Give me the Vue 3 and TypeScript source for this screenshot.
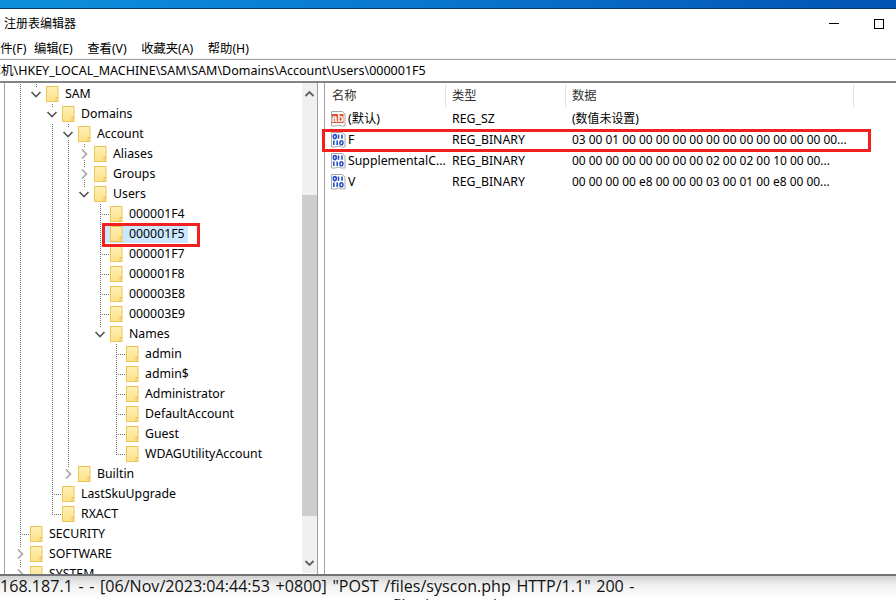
<script setup lang="ts">
interface TreeRow { label: string; cells: string; selected?: boolean }
const tree: TreeRow[] = [
  { label: 'SAM', cells: 'va' },
  { label: 'Domains', cells: 'v_a' },
  { label: 'Account', cells: 'v_vb' },
  { label: 'Aliases', cells: 'v_vvC' },
  { label: 'Groups', cells: 'v_vvC' },
  { label: 'Users', cells: 'v_vva' },
  { label: '000001F4', cells: 'v_vv_t' },
  { label: '000001F5', cells: 'v_vv_t', selected: true },
  { label: '000001F7', cells: 'v_vv_t' },
  { label: '000001F8', cells: 'v_vv_t' },
  { label: '000003E8', cells: 'v_vv_t' },
  { label: '000003E9', cells: 'v_vv_t' },
  { label: 'Names', cells: 'v_vv_a' },
  { label: 'admin', cells: 'v_vv__t' },
  { label: 'admin$', cells: 'v_vv__t' },
  { label: 'Administrator', cells: 'v_vv__t' },
  { label: 'DefaultAccount', cells: 'v_vv__t' },
  { label: 'Guest', cells: 'v_vv__t' },
  { label: 'WDAGUtilityAccount', cells: 'v_vv__l' },
  { label: 'Builtin', cells: 'v_vc' },
  { label: 'LastSkuUpgrade', cells: 'v_t' },
  { label: 'RXACT', cells: 'v_l' },
  { label: 'SECURITY', cells: 't' },
  { label: 'SOFTWARE', cells: 'C' },
  { label: 'SYSTEM', cells: 'C' },
]
const menus = ['编辑(E)', '查看(V)', '收藏夹(A)', '帮助(H)']
const values = [
  { icon: 'ab', name: '(默认)', type: 'REG_SZ', data: '(数值未设置)' },
  { icon: 'bin', name: 'F', type: 'REG_BINARY', data: '03 00 01 00 00 00 00 00 00 00 00 00 00 00 00 00...' },
  { icon: 'bin', name: 'SupplementalC...', type: 'REG_BINARY', data: '00 00 00 00 00 00 00 00 02 00 02 00 10 00 00...' },
  { icon: 'bin', name: 'V', type: 'REG_BINARY', data: '00 00 00 00 e8 00 00 00 03 00 01 00 e8 00 00...' },
]
const cellClass: Record<string, string> = {
  _: '', v: 'line', t: 'tee', l: 'corner', a: 'stub', b: 'line', c: 'stub', C: 'line',
}
</script>

<template>
  <div class="screen">
    <div class="accent"></div>
    <header class="titlebar">
      <span class="title">注册表编辑器</span>
      <div class="controls">
        <span class="minimize"></span>
        <span class="maximize"></span>
      </div>
    </header>
    <nav class="menubar">
      <span class="menu-first">文件(F)</span>
      <span v-for="m in menus" :key="m" class="menu">{{ m }}</span>
    </nav>
    <div class="address"><span class="address-text">计算机\HKEY_LOCAL_MACHINE\SAM\SAM\Domains\Account\Users\000001F5</span></div>

    <main class="panes">
      <section class="tree">
        <div class="tree-rows">
          <div v-for="row in tree" :key="row.label" class="row">
            <span
              v-for="(c, i) in row.cells.split('')"
              :key="i"
              class="cell"
              :class="cellClass[c]"
            >
              <svg v-if="c === 'a' || c === 'b'" class="chev" width="12" height="12" viewBox="0 0 12 12">
                <path d="M1.5 4 L6 8.5 L10.5 4" fill="none" stroke="#595959" stroke-width="1.7" />
              </svg>
              <svg v-else-if="c === 'c' || c === 'C'" class="chev" width="12" height="12" viewBox="0 0 12 12">
                <path d="M4 1.5 L8.5 6 L4 10.5" fill="none" stroke="#a6a6a6" stroke-width="1.7" />
              </svg>
            </span>
            <span class="entry" :class="{ selected: row.selected }">
              <svg class="folder" width="13" height="16" viewBox="0 0 13 16">
                <defs>
                  <linearGradient id="fill" x1="0" y1="0" x2="0" y2="1">
                    <stop offset="0" stop-color="#fff0b4" />
                    <stop offset="1" stop-color="#fde08a" />
                  </linearGradient>
                </defs>
                <rect x="0.5" y="0.5" width="11.5" height="15" fill="url(#fill)" stroke="#ecc654" />
                <path d="M10 15.5 V11.5 H12.5" fill="none" stroke="#ecc654" />
              </svg>
              <span class="label">{{ row.label }}</span>
            </span>
          </div>
        </div>
        <div class="scrollbar">
          <svg class="arrow" width="15" height="20" viewBox="0 0 15 20">
            <path d="M3.5 13 L7.5 9 L11.5 13" fill="none" stroke="#606060" stroke-width="1.8" />
          </svg>
          <span class="track-a"></span>
          <span class="thumb"></span>
          <span class="track-b"></span>
          <svg class="arrow" width="15" height="20" viewBox="0 0 15 20">
            <path d="M3.5 8 L7.5 12 L11.5 8" fill="none" stroke="#606060" stroke-width="1.8" />
          </svg>
        </div>
        <div class="mark mark-tree"></div>
      </section>

      <section class="list">
        <div class="list-head">
          <span class="col-name head-cell head-first">名称</span>
          <span class="col-type head-cell">类型</span>
          <span class="col-data head-cell">数据</span>
        </div>
        <div v-for="v in values" :key="v.name" class="value">
          <span class="col-name value-name">
            <svg v-if="v.icon === 'ab'" class="vicon" width="16" height="17" viewBox="0 0 16 17">
              <path d="M1.5 1.5 H12.5 L15 4 V16 H11.5 L8.5 15 L5 16 L1.5 16 Z" fill="#fff" stroke="#a9a9a9" />
              <rect x="2" y="4" width="11.5" height="9" fill="#d9532f" />
              <text x="7.7" y="11.6" text-anchor="middle" class="ab">ab</text>
            </svg>
            <svg v-else class="vicon" width="16" height="17" viewBox="0 0 16 17">
              <path d="M1.5 1.5 H12.5 L15 4 V16 H11.5 L8.5 15 L5 16 L1.5 16 Z" fill="#fff" stroke="#a9a9a9" />
              <g fill="none" stroke="#2450c8" stroke-width="1.6">
                <ellipse cx="4.8" cy="5.6" rx="1.5" ry="2" />
                <path d="M8.5 3.4 V7.8 M12 3.4 V7.8 M3.8 9.6 V14 M7.2 9.6 V14" />
                <ellipse cx="11.4" cy="11.8" rx="1.5" ry="2" />
              </g>
            </svg>
            <span>{{ v.name }}</span>
          </span>
          <span class="col-type">{{ v.type }}</span>
          <span class="col-data">{{ v.data }}</span>
        </div>
        <div class="mark mark-list"></div>
      </section>
    </main>

    <footer class="log">
      <div class="log-line">168.187.1 - - [06/Nov/2023:04:44:53 +0800] "POST /files/syscon.php HTTP/1.1" 200 -</div>
      <div class="log-next">files/syscon.php</div>
    </footer>
  </div>
</template>

<style>
html, body { margin: 0; padding: 0; background: #fff; overflow: hidden; }
</style>

<style scoped>
.screen {
  width: 896px;
  height: 600px;
  display: flex;
  flex-direction: column;
  overflow: hidden;
  background: #fff;
  color: #000;
  font: 12.3px/20px "Noto Sans", "Noto Sans CJK SC", sans-serif;
}
.accent {
  height: 8px;
  flex: none;
  background: linear-gradient(90deg, #0c90dc 0%, #0a78cf 45%, #0353b3 100%);
  border-bottom: 1px solid #0b3a6e;
}
.titlebar {
  height: 31px;
  flex: none;
  display: flex;
  align-items: center;
  justify-content: space-between;
  padding-left: 4px;
}
.title { font-size: 12px; position: relative; top: -1px; }
.controls { display: flex; align-items: center; width: 67px; height: 31px; position: relative; top: -1px; flex: none; }
.minimize { width: 10px; height: 1px; flex: none; background: #000; margin-right: 35px; }
.maximize { width: 8px; height: 8px; flex: none; border: 1px solid #000; }
.menubar {
  height: 18px;
  padding-bottom: 1px;
  box-sizing: content-box;
  flex: none;
  display: flex;
  align-items: center;
  border-bottom: 1px solid #a0a0a0;
  box-shadow: inset 0 -1px 0 #f0f0f0;
}
.menu-first { margin-left: -12px; width: 46px; flex: none; }
.menu { margin-right: 14.5px; }
.address {
  height: 21px;
  flex: none;
  display: flex;
  align-items: center;
  overflow: hidden;
  border-bottom: 2px solid #808488;
  box-sizing: content-box;
  margin-top: -1px;
  padding-top: 1px;
  font-size: 12.5px;
}
.address-text { margin-left: -24px; white-space: nowrap; }
.panes {
  flex: none;
  height: 491px;
  display: flex;
  border-bottom: 2px solid #707478;
  box-sizing: content-box;
}
.tree {
  width: 314px;
  margin-left: 4px;
  flex: none;
  display: flex;
  border-left: 1px solid #a0a0a0;
  border-right: 1px solid #a0a0a0;
  box-sizing: border-box;
  position: relative;
}
.tree-rows {
  flex: 1;
  min-width: 0;
  overflow: hidden;
  padding-left: 9px;
  padding-top: 1px;
}
.row { height: 20px; display: flex; align-items: stretch; white-space: nowrap; }
.cell {
  width: 16px;
  flex: none;
  display: flex;
  align-items: center;
  justify-content: flex-start;
  background-repeat: no-repeat;
}
.line {
  background-image: repeating-linear-gradient(to bottom, #6e6e6e 0 1px, transparent 1px 2px);
  background-size: 1px 100%;
  background-position: 6px 0;
}
.stub {
  background-image: repeating-linear-gradient(to bottom, #6e6e6e 0 1px, transparent 1px 2px);
  background-size: 1px 4px;
  background-position: 6px 0;
}
.tee, .corner {
  background-image:
    repeating-linear-gradient(to bottom, #6e6e6e 0 1px, transparent 1px 2px),
    repeating-linear-gradient(to right, #6e6e6e 0 1px, transparent 1px 2px);
  background-position: 6px 0, 6px 10px;
  background-size: 1px 100%, 9px 1px;
}
.corner { background-size: 1px 11px, 9px 1px; }
.chev { background: #fff; display: block; }
.entry {
  display: flex;
  align-items: center;
  height: 20px;
}
.folder { flex: none; display: block; }
.label { margin-left: 6px; padding-right: 12px; }
.selected {
  background: linear-gradient(#fff 0 1px, #cce8ff 1px 19px, #fff 19px);
  margin-left: -7px;
  padding-left: 7px;
}
.selected .label { padding-right: 3px; }
.scrollbar {
  width: 15px;
  flex: none;
  margin: 0 0 1px 0;
  background: #f0f0f0;
  display: flex;
  flex-direction: column;
}
.arrow { flex: none; display: block; }
.track-a { height: 92px; flex: none; }
.thumb { height: 321px; flex: none; background: #cdcdcd; }
.track-b { flex: 1; }
.list {
  flex: 1;
  min-width: 0;
  margin-left: 6px;
  border-left: 1px solid #a0a0a0;
  position: relative;
}
.list-head { height: 24px; margin-top: 1px; display: flex; align-items: center; }
.col-name { width: 121px; flex: none; padding-left: 6px; box-sizing: border-box; display: flex; align-items: center; }
.col-type { width: 120px; flex: none; padding-left: 6px; box-sizing: border-box; }
.col-data { width: 288px; flex: none; padding-left: 6px; box-sizing: border-box; white-space: nowrap; font-size: 11.95px; }
.head-cell { height: 24px; border-right: 1px solid #e5e5e5; display: flex; align-items: center; color: #333; font-size: 12.3px; }
.head-first { padding-left: 7px; }
.value { height: 21px; display: flex; align-items: center; }
.value-name { padding-left: 5px; white-space: nowrap; overflow: hidden; }
.vicon { flex: none; margin-right: 2px; display: block; }
.ab { font: bold 10px "Liberation Sans", sans-serif; fill: #fff; }
.mark { position: absolute; border: 3px solid #f32020; box-sizing: border-box; pointer-events: none; }
.mark-tree { left: 97px; top: 140px; width: 98px; height: 24px; }
.mark-list { left: -3px; top: 46px; width: 549px; height: 23px; }
.log {
  flex: 1;
  min-height: 0;
  overflow: hidden;
  background: linear-gradient(#d0d0d0 0, #f2f2f2 10px, #fff 24px);
  font: 16.1px/18px "Open Sans", sans-serif;
  word-spacing: 1.4px;
  color: #111;
}
.log-line { white-space: nowrap; margin-top: 1px; }
.log-next { margin-top: 1px; margin-left: 392px; white-space: nowrap; }
</style>
